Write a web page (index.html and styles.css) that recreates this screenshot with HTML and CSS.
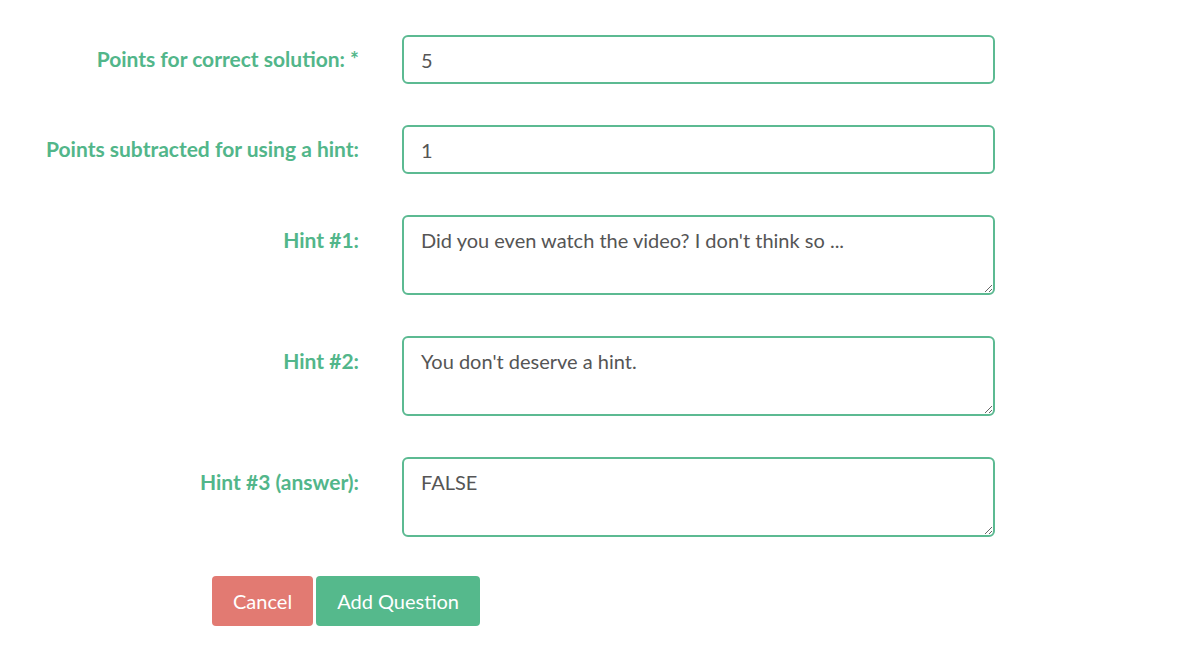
FILE: index.html
```html
<!DOCTYPE html>
<html>
<head>
<meta charset="utf-8">
<link rel="stylesheet" href="styles.css">
</head>
<body>
<form class="form">
  <div class="row">
    <label class="label">Points for correct solution: *</label>
    <input class="field" type="text" value="5">
  </div>
  <div class="row">
    <label class="label">Points subtracted for using a hint:</label>
    <input class="field" type="text" value="1">
  </div>
  <div class="row">
    <label class="label label-area">Hint #1:</label>
    <textarea class="field area">Did you even watch the video? I don't think so ...</textarea>
  </div>
  <div class="row">
    <label class="label label-area">Hint #2:</label>
    <textarea class="field area">You don't deserve a hint.</textarea>
  </div>
  <div class="row">
    <label class="label label-area">Hint #3 (answer):</label>
    <textarea class="field area">FALSE</textarea>
  </div>
  <div class="actions">
    <button type="button" class="btn btn-cancel">Cancel</button>
    <button type="button" class="btn btn-add">Add Question</button>
  </div>
</form>
</body>
</html>
```
FILE: styles.css
```css
html, body {
  margin: 0;
  padding: 0;
  background: #ffffff;
}
body {
  font-family: Lato, "Open Sans", sans-serif;
}
.form {
  display: flex;
  flex-direction: column;
  gap: 41px;
  padding-top: 35px;
}
.row {
  display: grid;
  grid-template-columns: 359px 593px;
  column-gap: 43px;
  align-items: start;
}
.label {
  text-align: right;
  font-weight: bold;
  font-size: 21px;
  color: #52b68a;
  line-height: 48px;
}
.label-area {
  line-height: 24px;
  padding-top: 13px;
}
.field {
  box-sizing: border-box;
  height: 49px;
  width: 593px;
  margin: 0;
  border: 2px solid #5cba92;
  border-radius: 6px;
  padding: 0 17px;
  font-family: Lato, "Open Sans", sans-serif;
  font-size: 20px;
  color: #555555;
  background: #ffffff;
  outline: none;
}
.area {
  height: 80px;
  padding: 10px 17px;
  line-height: 26px;
  resize: vertical;
}
.actions {
  display: flex;
  gap: 3px;
  padding-left: 212px;
  margin-top: -2px;
}
.btn {
  height: 50px;
  border: none;
  border-radius: 4px;
  padding: 0 21px;
  font-family: Lato, "Open Sans", sans-serif;
  font-size: 20px;
  color: #ffffff;
  cursor: pointer;
}
.btn-cancel {
  background: #e27a72;
}
.btn-add {
  background: #55b98c;
}
```
